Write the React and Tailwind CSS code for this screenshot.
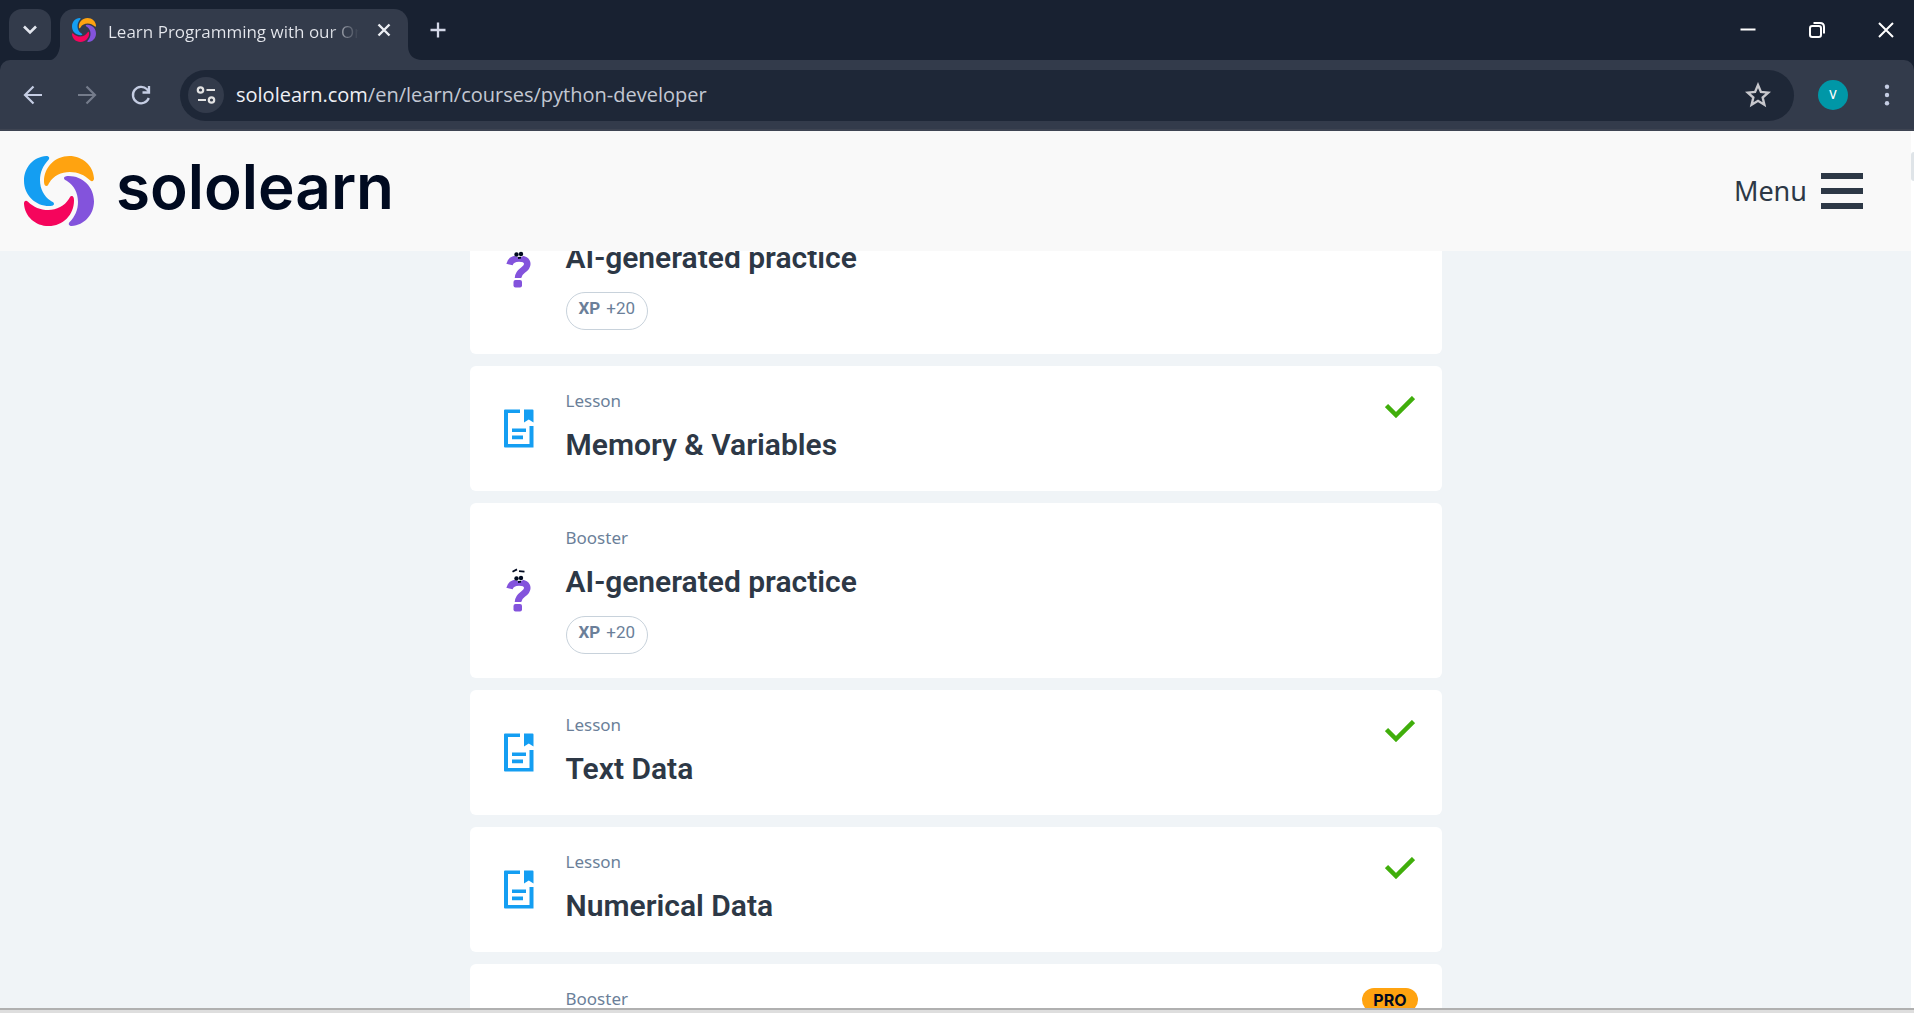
import React from "react";

const PETAL =
  "M67 0 C29 2 0 34 0 74 C0 117 34 150 76 150 C82 150 90 149 90 143 C90 138 84 137 80 134 C60 122 48 98 48 73 C48 48 57 29 73 12 C79 5 74 0 67 0 Z";

function Swirl({ className }) {
  return (
    <svg viewBox="0 0 210 210" className={className} aria-hidden="true">
      <path d={PETAL} fill="#149ef2" />
      <path d={PETAL} fill="#ffa310" transform="rotate(90 105 105)" />
      <path d={PETAL} fill="#8353dc" transform="rotate(180 105 105)" />
      <path d={PETAL} fill="#f5055c" transform="rotate(270 105 105)" />
    </svg>
  );
}

function Stroke({ d, className, width = 2, children }) {
  return (
    <svg viewBox="0 0 24 24" className={className} fill="none" stroke="currentColor" strokeWidth={width} aria-hidden="true">
      {d && <path d={d} />}
      {children}
    </svg>
  );
}

function TabStrip() {
  return (
    <div className="flex h-[60px] shrink-0 items-end bg-[#182131]">
      <button aria-label="Search tabs" className="mb-[9px] ml-[9px] grid size-[42px] shrink-0 place-items-center rounded-[13px] bg-[#333b4b] text-[#e3e6ee]">
        <Stroke className="size-6" width={2.6} d="M6 8.5l6 6 6-6" />
      </button>
      <svg viewBox="0 0 9 14" className="h-[14px] w-[9px] shrink-0" aria-hidden="true">
        <path d="M9 0C8 8 4 13 0 14H9Z" fill="#333b4b" />
      </svg>
      <div className="flex h-[51px] w-[348px] shrink-0 items-center rounded-t-[14px] bg-[#333b4b] pl-3 pr-3 pb-[9px]">
        <Swirl className="size-6 shrink-0" />
        <span className="ml-3 w-[251px] overflow-hidden whitespace-nowrap bg-linear-to-r from-[#e6e8ee] from-88% to-transparent bg-clip-text pt-1 font-['Open_Sans'] text-[17px] leading-6 text-transparent">
          Learn Programming with our On
        </span>
        <button aria-label="Close tab" className="ml-auto grid size-6 place-items-center text-[#eceef4]">
          <Stroke className="size-6" width={2.4} d="M6.500 6.500l11 11M17.500 6.500l-11 11" />
        </button>
      </div>
      <svg viewBox="0 0 14 14" className="size-[14px] shrink-0" aria-hidden="true">
        <path d="M0 0C0 9 6 14 14 14H0Z" fill="#333b4b" />
      </svg>
      <button aria-label="New tab" className="mb-[18px] ml-1 grid size-6 shrink-0 place-items-center text-[#d3d8e8]">
        <Stroke className="size-6" width={2.3} d="M12 4.500v15M4.500 12h15" />
      </button>
      <div className="ml-auto mb-[18px] mr-4 flex gap-[45px] text-white">
        <button aria-label="Minimize" className="size-6">
          <Stroke className="size-6" width={2} d="M4.500 11.500h15" />
        </button>
        <button aria-label="Restore" className="size-6">
          <Stroke className="size-6" width={2}>
            <rect x="5" y="8" width="11" height="11" rx="2.200" />
            <path d="M8.500 5H15c2.500 0 4 1.500 4 4v6.500" />
          </Stroke>
        </button>
        <button aria-label="Close window" className="size-6">
          <Stroke className="size-6" width={2} d="M5 5l14 14M19 5L5 19" />
        </button>
      </div>
    </div>
  );
}

function Toolbar() {
  return (
    <div className="shrink-0 bg-[#182131]">
      <div className="flex h-[71px] items-center rounded-t-[10px] border-b-2 border-[#3e4452] bg-[#333b4b] pt-px">
        <button aria-label="Back" className="ml-[21px] size-6 text-[#c5cde3]">
          <Stroke className="size-6" width={2.2} d="M21 12H4.500M12.500 3.500L4 12l8.500 8.500" />
        </button>
        <button aria-label="Forward" className="ml-[30px] size-6 text-[#757c8b]">
          <Stroke className="size-6" width={2.2} d="M3 12h16.500M11.500 3.500L20 12l-8.500 8.500" />
        </button>
        <button aria-label="Reload" className="ml-[30px] size-6 text-[#c5cde3]">
          <Stroke className="size-6" width={2.3}>
            <path d="M19.800 15A8.200 8.200 0 1 1 18 6.300L20 8.800" />
            <path d="M20 3v6.500h-6.500" />
          </Stroke>
        </button>
        <div className="ml-[27px] flex h-[51px] grow items-center rounded-full bg-[#1e2737] pl-2 pr-[23px]">
          <button aria-label="Site information" className="grid size-9 shrink-0 place-items-center rounded-full bg-[#333b4b] text-[#e3e3e3]">
            <Stroke className="size-6" width={2.2}>
              <circle cx="6.500" cy="7" r="2.700" />
              <path d="M12.500 7H21M4 17h8" />
              <circle cx="17.500" cy="17" r="2.700" />
            </Stroke>
          </button>
          <div role="textbox" aria-label="Address" className="ml-3 grow font-['Open_Sans'] text-[20px] leading-7 text-[#c3c8d3]">
            <span className="text-[#eef0f5]">sololearn.com</span>/en/learn/courses/python-developer
          </div>
          <button aria-label="Bookmark" className="size-[26px] text-[#c7c7cc]">
            <Stroke className="size-[26px]" width={2.2} d="M12 2.800l2.700 6.400 6.800.6-5.200 4.500 1.600 6.700L12 17.400 6.100 21l1.600-6.700L2.500 9.800l6.800-.6z" />
          </button>
        </div>
        <button aria-label="Profile" className="ml-6 grid size-[30px] place-items-center rounded-full bg-[#0097a7] text-[12px] font-medium text-white">
          V
        </button>
        <button aria-label="Browser menu" className="ml-[27px] mr-[15px] size-6 text-[#c5cde3]">
          <svg viewBox="0 0 24 24" className="size-6" fill="currentColor" aria-hidden="true">
            <circle cx="12" cy="3.800" r="2.200" />
            <circle cx="12" cy="12" r="2.200" />
            <circle cx="12" cy="20.200" r="2.200" />
          </svg>
        </button>
      </div>
    </div>
  );
}

function SiteHeader() {
  return (
    <header className="flex h-[120px] shrink-0 items-center bg-[#f9f9f9] pl-6 pr-12">
      <a href="#home" className="flex items-center">
        <Swirl className="size-[70px]" />
        <span className="-mt-2 ml-[22px] font-['Inter'] text-[62px] leading-[72px] font-semibold text-[#000a20]">sololearn</span>
      </a>
      <button className="ml-auto flex items-center gap-[14px] text-[27px] leading-9 text-[#2d3846]">
        Menu
        <span className="flex w-[42px] flex-col gap-[9px]">
          <span className="h-[6px] bg-[#2d3846]" />
          <span className="h-[6px] bg-[#2d3846]" />
          <span className="h-[6px] bg-[#2d3846]" />
        </span>
      </button>
    </header>
  );
}

function LessonIcon() {
  return (
    <svg viewBox="0 0 30 39" className="h-[39px] w-[30px]" fill="#149ef2" aria-hidden="true">
      <path d="M1 0.500H16V4H4V35H25.500V17H29.500V38.500H1Q0 38.500 0 37.500V1.500Q0 0.500 1 0.500Z" />
      <path d="M20 0.500H28.500Q29.500 0.500 29.500 1.500V13.500L24.750 10.500L20 13.500Z" />
      <path d="M8 19.500H22V23H8ZM8 26.500H19V30.300H8Z" />
    </svg>
  );
}

function BoosterIcon() {
  return (
    <svg viewBox="0 0 26 44" className="h-[44px] w-[26px]" fill="none" aria-hidden="true">
      <path d="M3.500 20.500C4.500 16.500 8 14.500 13 14.500C18 14.500 21.300 16.500 21.300 20C21.300 26.500 12 26 12 34" stroke="#8353dc" strokeWidth="6.500" />
      <rect x="7.500" y="36" width="8.500" height="7.500" rx="2" fill="#8353dc" />
      <ellipse cx="13" cy="10" rx="5.500" ry="3.300" fill="#ffffff" />
      <circle cx="10.500" cy="10.500" r="2.200" fill="#000a20" />
      <circle cx="15" cy="10" r="2.200" fill="#000a20" />
      <path d="M6.500 3.800L11 1.400M13 3.200L18.500 3.700M12 14L15 13.700" stroke="#000a20" strokeWidth="1.800" />
    </svg>
  );
}

function Card({ kind, title, xp, done, pro }) {
  return (
    <li className="flex shrink-0 items-center rounded-md bg-white pl-[34px] pr-6 pb-6 pt-[23px]">
      <div className="mr-8 flex w-[30px] justify-center">{kind === "Lesson" ? <LessonIcon /> : <BoosterIcon />}</div>
      <div className="grow">
        <p className="text-[17px] leading-6 text-[#6b7f99]">{kind}</p>
        <h3 className="mt-[10px] font-['Roboto'] text-[30px] leading-[44px] font-semibold text-[#2d3846]">{title}</h3>
        {xp && (
          <div className="mt-3 inline-flex h-[38px] items-center gap-[6px] rounded-full border border-[#c8d2db] px-3 pb-1 align-top font-['Roboto'] text-[17px] text-[#6b7f99]">
            <b className="font-bold">XP</b>
            <span>+{xp}</span>
          </div>
        )}
      </div>
      {done && (
        <svg viewBox="0 0 30 22" className="mr-[3px] mt-[7px] h-[22px] w-[30px] self-start" fill="none" aria-label="Completed">
          <path d="M1.500 9.500L11 19L28.500 1.500" stroke="#40ae0b" strokeWidth="4.500" />
        </svg>
      )}
      {pro && (
        <span className="mt-px self-start rounded-full bg-[#ffa310] px-[11px] font-['Inter'] text-[16px] leading-6 font-bold text-[#000a20]">PRO</span>
      )}
    </li>
  );
}

const ITEMS = [
  { kind: "Booster", title: "AI-generated practice", xp: 20 },
  { kind: "Lesson", title: "Memory & Variables", done: true },
  { kind: "Booster", title: "AI-generated practice", xp: 20 },
  { kind: "Lesson", title: "Text Data", done: true },
  { kind: "Lesson", title: "Numerical Data", done: true },
  { kind: "Booster", title: "AI-generated practice", xp: 20, pro: true },
];

export default function App() {
  return (
    <div className="flex h-screen flex-col overflow-hidden font-['Noto_Sans',sans-serif]">
      <TabStrip />
      <Toolbar />
      <div className="flex min-h-0 grow bg-white">
        <div className="flex min-w-0 grow flex-col bg-[#f0f4f7]">
          <SiteHeader />
          <main className="min-h-0 grow overflow-hidden">
            <ul className="mx-auto -mt-[72px] flex max-w-[972px] flex-col gap-3">
              {ITEMS.map((item, i) => (
                <Card key={i} {...item} />
              ))}
            </ul>
          </main>
        </div>
        <div className="w-[3px] pt-[21px]">
          <div className="h-[29px] rounded-l-md bg-[#dfe4e8]" />
        </div>
      </div>
      <div className="h-[5px] shrink-0 border-t-2 border-[#b0b0b0] bg-[#dedede]" />
    </div>
  );
}
